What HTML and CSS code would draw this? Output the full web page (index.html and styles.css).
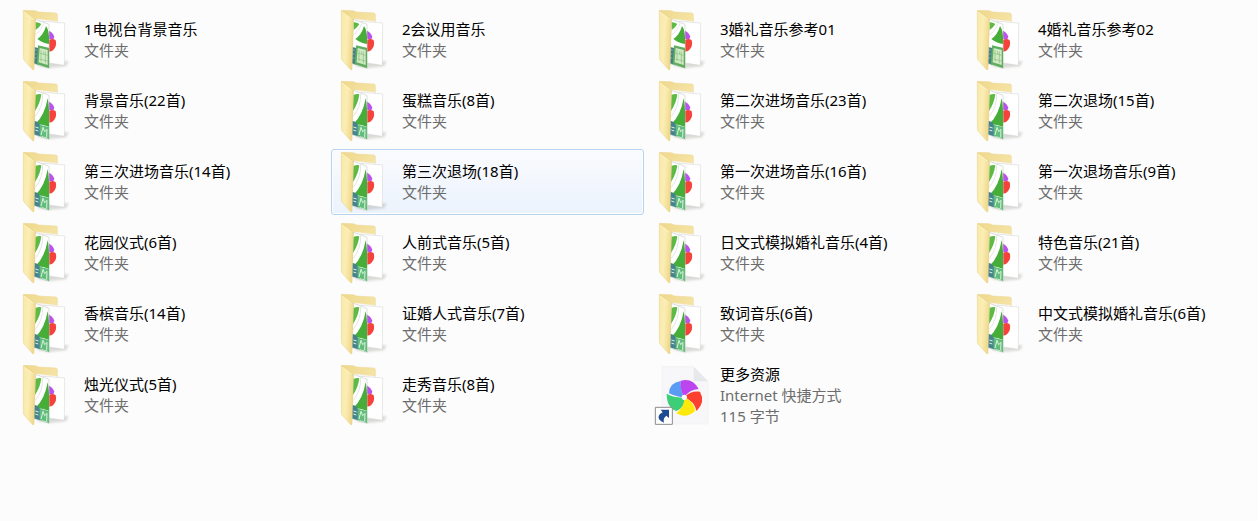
FILE: index.html
```
<!DOCTYPE html>
<html lang="zh-CN">
<head>
<meta charset="utf-8">
<meta name="viewport" content="width=device-width, initial-scale=1">
<title>音乐</title>
<link rel="stylesheet" href="styles.css">
</head>
<body>
<svg class="sprite" aria-hidden="true">
  <defs>
    <linearGradient id="front" x1="0" x2="1" y1="0" y2="0.3">
      <stop offset="0" stop-color="#f8e8a8"/><stop offset="0.5" stop-color="#fbeeb4"/><stop offset="1" stop-color="#f0d98f"/>
    </linearGradient>
    <linearGradient id="back" x1="0" x2="1" y1="0" y2="1">
      <stop offset="0" stop-color="#efd88c"/><stop offset="1" stop-color="#faecb6"/>
    </linearGradient>
    <filter id="soft" x="-20%" y="-20%" width="140%" height="140%"><feGaussianBlur stdDeviation="3"/></filter>
    <clipPath id="sheet"><path d="M76 48 117 62 118 193 71 178Z"/></clipPath>
  </defs>
  <symbol id="folder-base" viewBox="12 12 186 192">
    <path d="M80 186 118 192 168 187 176 172 110 168Z" fill="#8b8b83" opacity=".3" filter="url(#soft)"/>
    <path d="M41 19 76 20 86 24 138 27Q142 28 142 32V140L72 160Z" fill="url(#back)" stroke="#ead593" stroke-width="1.5"/>
    <path d="M78 44 142 52V160H82Z" fill="#f6f6f4"/>
    <path d="M100 52 164 57 163 184 112 176Z" fill="#fff" stroke="#d2d2d2" stroke-width="1.5"/>
    <path d="M117 80Q128 84 133 98L130 106H117Z" fill="#bb52ec"/>
    <path d="M117 108Q128 101 137 109Q143 128 126 141L117 143Z" fill="#f5423a"/>
  </symbol>
  <symbol id="folder-front" viewBox="12 12 186 192">
    <path d="M40 20 72 43Q76 46 76 52L72 194Q72 200 68 197L42 168Q40 165 40 160Z" fill="url(#front)" stroke="#e6d086" stroke-width="1.5"/>
    <path d="M42 24 71 46" fill="none" stroke="#fff5ca" stroke-width="2"/>
  </symbol>
  <symbol id="folder" viewBox="12 12 186 192">
    <use href="#folder-base" x="12" y="12" width="186" height="192"/>
    <path d="M76 46 117 61 118 193 71 179Z" fill="#fff" stroke="#b9c2b6" stroke-width="1.5"/>
    <g clip-path="url(#sheet)">
      <path d="M76 60Q88 55 94 58Q91 84 75 108Z" fill="#5cba45"/>
      <path d="M98 54Q100 94 76 124" fill="none" stroke="#e3e6e1" stroke-width="3"/>
      <path d="M113 70Q118 90 118 156L100 150 76 147Q104 122 113 70Z" fill="#45ad38"/>
      <path d="M70 138Q82 136 90 150V190L70 182Z" fill="#44838f"/>
      <path d="M89 149 119 157V195L89 186Z" fill="#62bd7c"/>
      <path d="M76 156 86 159M76 165 85 168M93 180 99 157 104 170 111 163 110 186M95 185 113 190" fill="none" stroke="#dcf3da" stroke-width="3"/>
    </g>
    <use href="#folder-front" x="12" y="12" width="186" height="192"/>
  </symbol>
  <symbol id="folder-alt" viewBox="12 12 186 192">
    <use href="#folder-base" x="12" y="12" width="186" height="192"/>
    <path d="M76 46 117 61 118 193 71 179Z" fill="#fff" stroke="#b9c2b6" stroke-width="1.5"/>
    <g clip-path="url(#sheet)">
      <path d="M76 55Q86 54 94 60Q88 71 77 78Z" fill="#5cba45"/>
      <path d="M102 58Q95 80 76 93" fill="none" stroke="#e3e6e1" stroke-width="3"/>
      <path d="M108 66Q118 78 118 120Q100 119 82 105Q101 92 108 66Z" fill="#45ad38"/>
      <path d="M70 128 84 132V186L70 180Z" fill="#447f86"/>
      <path d="M84 124 119 132V195L80 183Z" fill="#5fae60"/>
      <path d="M89 132 113 138V183L86 175Z" fill="#d3e9c6"/>
      <path d="M89 148 113 154M93 138V172M101 142V150M106 143V178M88 165 113 171" stroke="#87bf79" stroke-width="2"/>
      <path d="M73 138H80M73 150H79M73 162H79" stroke="#a9d1cc" stroke-width="2"/>
    </g>
    <use href="#folder-front" x="12" y="12" width="186" height="192"/>
  </symbol>
  <symbol id="shortcut" viewBox="30 9 186 192">
    <path d="M66 20H161L204 64V192H66Z" fill="#f7f7f9" stroke="#ececef" stroke-width="1.5"/>
    <path d="M161 20 204 64H168Q161 64 161 56Z" fill="#e7e8eb"/>
    <path d="M133 112Q112 112 87 100Q88 68 122 63Q121 90 133 112Z" fill="#5a9cf4"/>
    <path d="M133 112Q119 88 122 62Q158 52 176 87Q148 88 133 112Z" fill="#bd45ef"/>
    <path d="M133 112Q151 91 180 95Q197 125 170 153Q162 123 133 112Z" fill="#fb4030"/>
    <path d="M133 112Q161 125 166 152Q138 178 109 160Q132 143 133 112Z" fill="#ffe80b"/>
    <path d="M133 112Q134 143 110 153Q80 144 80 101Q107 115 133 112Z" fill="#3fce78"/>
    <circle cx="133" cy="112" r="8" fill="#fff"/>
    <path d="M46 142H97V193H46Z" fill="#fff" stroke="#8c8c8c" stroke-width="3"/>
    <path d="M62 149H87V174L79 167Q68 175 72 188Q53 181 56 168Q58 162 68 157Z" fill="#1f4b93"/>
  </symbol>
</svg>

<main>
  <ul class="files">
    <li class="file"><svg class="icon" aria-hidden="true"><use href="#folder-alt"/></svg><div class="text"><p class="name">1电视台背景音乐</p><p class="meta">文件夹</p></div></li>
    <li class="file"><svg class="icon" aria-hidden="true"><use href="#folder-alt"/></svg><div class="text"><p class="name">2会议用音乐</p><p class="meta">文件夹</p></div></li>
    <li class="file"><svg class="icon" aria-hidden="true"><use href="#folder-alt"/></svg><div class="text"><p class="name">3婚礼音乐参考01</p><p class="meta">文件夹</p></div></li>
    <li class="file"><svg class="icon" aria-hidden="true"><use href="#folder-alt"/></svg><div class="text"><p class="name">4婚礼音乐参考02</p><p class="meta">文件夹</p></div></li>
    <li class="file"><svg class="icon" aria-hidden="true"><use href="#folder"/></svg><div class="text"><p class="name">背景音乐(22首)</p><p class="meta">文件夹</p></div></li>
    <li class="file"><svg class="icon" aria-hidden="true"><use href="#folder"/></svg><div class="text"><p class="name">蛋糕音乐(8首)</p><p class="meta">文件夹</p></div></li>
    <li class="file"><svg class="icon" aria-hidden="true"><use href="#folder"/></svg><div class="text"><p class="name">第二次进场音乐(23首)</p><p class="meta">文件夹</p></div></li>
    <li class="file"><svg class="icon" aria-hidden="true"><use href="#folder"/></svg><div class="text"><p class="name">第二次退场(15首)</p><p class="meta">文件夹</p></div></li>
    <li class="file"><svg class="icon" aria-hidden="true"><use href="#folder"/></svg><div class="text"><p class="name">第三次进场音乐(14首)</p><p class="meta">文件夹</p></div></li>
    <li class="file active"><svg class="icon" aria-hidden="true"><use href="#folder"/></svg><div class="text"><p class="name">第三次退场(18首)</p><p class="meta">文件夹</p></div></li>
    <li class="file"><svg class="icon" aria-hidden="true"><use href="#folder"/></svg><div class="text"><p class="name">第一次进场音乐(16首)</p><p class="meta">文件夹</p></div></li>
    <li class="file"><svg class="icon" aria-hidden="true"><use href="#folder"/></svg><div class="text"><p class="name">第一次退场音乐(9首)</p><p class="meta">文件夹</p></div></li>
    <li class="file"><svg class="icon" aria-hidden="true"><use href="#folder"/></svg><div class="text"><p class="name">花园仪式(6首)</p><p class="meta">文件夹</p></div></li>
    <li class="file"><svg class="icon" aria-hidden="true"><use href="#folder"/></svg><div class="text"><p class="name">人前式音乐(5首)</p><p class="meta">文件夹</p></div></li>
    <li class="file"><svg class="icon" aria-hidden="true"><use href="#folder"/></svg><div class="text"><p class="name">日文式模拟婚礼音乐(4首)</p><p class="meta">文件夹</p></div></li>
    <li class="file"><svg class="icon" aria-hidden="true"><use href="#folder"/></svg><div class="text"><p class="name">特色音乐(21首)</p><p class="meta">文件夹</p></div></li>
    <li class="file"><svg class="icon" aria-hidden="true"><use href="#folder"/></svg><div class="text"><p class="name">香槟音乐(14首)</p><p class="meta">文件夹</p></div></li>
    <li class="file"><svg class="icon" aria-hidden="true"><use href="#folder"/></svg><div class="text"><p class="name">证婚人式音乐(7首)</p><p class="meta">文件夹</p></div></li>
    <li class="file"><svg class="icon" aria-hidden="true"><use href="#folder"/></svg><div class="text"><p class="name">致词音乐(6首)</p><p class="meta">文件夹</p></div></li>
    <li class="file"><svg class="icon" aria-hidden="true"><use href="#folder"/></svg><div class="text"><p class="name">中文式模拟婚礼音乐(6首)</p><p class="meta">文件夹</p></div></li>
    <li class="file"><svg class="icon" aria-hidden="true"><use href="#folder"/></svg><div class="text"><p class="name">烛光仪式(5首)</p><p class="meta">文件夹</p></div></li>
    <li class="file"><svg class="icon" aria-hidden="true"><use href="#folder"/></svg><div class="text"><p class="name">走秀音乐(8首)</p><p class="meta">文件夹</p></div></li>
    <li class="file"><svg class="icon" aria-hidden="true"><use href="#shortcut"/></svg><div class="text"><p class="name">更多资源</p><p class="meta">Internet 快捷方式</p><p class="meta">115 字节</p></div></li>
  </ul>
</main>
</body>
</html>
```
FILE: styles.css
```
body {
  margin: 0;
  background: #fcfcfc;
  color: #000;
  font: 15px/21px "Noto Sans", "Noto Sans CJK SC", sans-serif;
}

.sprite {
  position: absolute;
  width: 0;
  height: 0;
}

.files {
  display: grid;
  grid-template-columns: repeat(3, minmax(0, 313fr)) minmax(0, 291fr);
  gap: 5px;
  margin: 0;
  padding: 7px 0 7px 13px;
  list-style: none;
}

.file {
  display: flex;
  align-items: center;
  gap: 8px;
  border: 1px solid transparent;
  border-radius: 3px;
}

.active {
  border-color: #b9d3ee;
  background: linear-gradient(#fafbfd, #ebf3fd);
  box-shadow: inset 0 0 0 1px #fcfdff;
}

.icon {
  flex: none;
  width: 62px;
  height: 64px;
}

.text {
  min-width: 0;
}

.name,
.meta {
  margin: 0;
  white-space: nowrap;
}

.meta {
  color: #6d6d6d;
}
```
